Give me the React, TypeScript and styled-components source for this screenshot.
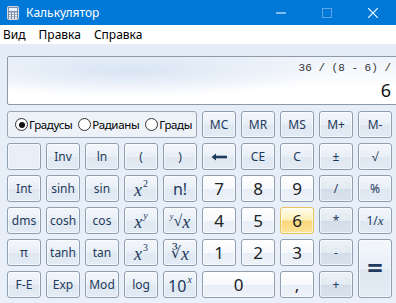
import styled, { createGlobalStyle, css } from "styled-components";

const GlobalStyle = createGlobalStyle`
  html, body {
    margin: 0;
    padding: 0;
    background: #e6eef8;
  }
  body {
    font-family: "Noto Sans", "Open Sans", sans-serif;
  }
`;

const uiFont = `"Noto Sans", "Open Sans", sans-serif`;
const mathFont = `"Liberation Serif", "DejaVu Serif", serif`;

const Window = styled.div`
  width: 396px;
  height: 303px;
  overflow: hidden;
  display: flex;
  flex-direction: column;
  background: linear-gradient(180deg, #e4ecf7 0%, #e9f0f9 100%);
`;

const TitleBar = styled.div`
  height: 25px;
  flex-shrink: 0;
  background: #0078d7;
  display: flex;
  align-items: center;
  padding-left: 7px;
  color: #ffffff;
  font-family: ${uiFont};
  font-size: 12px;
`;

const TitleText = styled.span`
  margin-left: 7px;
  flex: 1;
`;

const WinButton = styled.div`
  width: 46px;
  height: 25px;
  display: flex;
  align-items: center;
  justify-content: center;
`;

const MenuBar = styled.div`
  height: 19px;
  flex-shrink: 0;
  background: #ffffff;
  display: flex;
  align-items: center;
  padding-left: 3px;
  font-family: ${uiFont};
  font-size: 12px;
  color: #000;
`;

const MenuItem = styled.span`
  margin-right: 13px;
`;

const Body = styled.div`
  padding: 12px 4px 0 7px;
  display: flex;
  flex-direction: column;
  gap: 6px;
`;

const Display = styled.div`
  height: 47px;
  width: 383px;
  border: 1px solid #8e9aa8;
  border-radius: 2px;
  background:
    radial-gradient(ellipse 200px 26px at 120px 14px, rgba(214, 227, 243, 0.9), rgba(255, 255, 255, 0) 100%),
    linear-gradient(180deg, #eef3fa 0%, #ffffff 70%);
  display: flex;
  flex-direction: column;
  align-items: flex-end;
  padding-right: 6px;
`;

const Expr = styled.div`
  margin-top: 5px;
  font-family: "Liberation Mono", "DejaVu Sans Mono", monospace;
  font-size: 11px;
  color: #333;
  height: 13px;
  line-height: 13px;
`;

const Result = styled.div`
  margin-top: 4px;
  font-family: ${uiFont};
  font-size: 18px;
  line-height: 22px;
  color: #111;
`;

const Keypad = styled.div`
  display: grid;
  grid-template-columns: repeat(10, 34px);
  grid-auto-rows: 27px;
  gap: 5px;
`;

const RadioGroup = styled.div`
  grid-column: span 5;
  border: 1px solid #9aa7b7;
  border-radius: 3px;
  background: #edf2f9;
  display: flex;
  align-items: center;
  padding-left: 7px;
  gap: 6px;
  font-family: ${uiFont};
  font-size: 11.5px;
  letter-spacing: -0.35px;
  color: #000;
  white-space: nowrap;
`;

const RadioOption = styled.label`
  display: flex;
  align-items: center;
  gap: 1px;
`;

const RadioCircle = styled.span<{ checked?: boolean }>`
  width: 11px;
  height: 11px;
  flex-shrink: 0;
  border-radius: 50%;
  border: 1px solid #333;
  background: #fff;
  display: flex;
  align-items: center;
  justify-content: center;
  &::after {
    content: "";
    width: 6px;
    height: 6px;
    border-radius: 50%;
    background: ${({ checked }) => (checked ? "#111" : "transparent")};
  }
`;

type Kind = "fn" | "digit" | "op" | "hot" | "blank";

const kindStyles: Record<Kind, ReturnType<typeof css>> = {
  fn: css`
    background: linear-gradient(180deg, #f3f7fc 0%, #e9eff7 50%, #dfe7f1 52%, #e3ebf4 100%);
    color: #1e3a5c;
    font-size: 12px;
  `,
  digit: css`
    background: linear-gradient(180deg, #ffffff 0%, #f6f9fd 50%, #e8eef6 52%, #edf2f9 100%);
    color: #222;
    font-size: 17px;
  `,
  op: css`
    background: linear-gradient(180deg, #edf2f8 0%, #e3eaf3 50%, #d3deea 52%, #d9e3ee 100%);
    color: #1e3a5c;
    font-size: 12px;
  `,
  hot: css`
    background: linear-gradient(180deg, #fffcea 0%, #fdf0b8 48%, #fbd67a 52%, #fde49c 100%);
    border-color: #e7c45b;
    color: #222;
    font-size: 17px;
  `,
  blank: css`
    background: #e9eff8;
  `,
};

const Key = styled.div<{ kind?: Kind; wide?: boolean; tall?: boolean }>`
  box-sizing: border-box;
  border: 1px solid #8f9fb2;
  border-radius: 3px;
  display: flex;
  align-items: center;
  justify-content: center;
  font-family: ${uiFont};
  line-height: 1;
  box-shadow: inset 0 0 0 1px rgba(255, 255, 255, 0.6);
  ${({ kind = "fn" }) => kindStyles[kind]}
  ${({ wide }) => wide && "grid-column: span 2;"}
  ${({ tall }) => tall && "grid-row: span 2;"}
`;

const MathLabel = styled.span`
  display: flex;
  align-items: flex-start;
  color: #1e3a5c;
  margin-top: 2px;
`;

const Var = styled.i<{ small?: boolean }>`
  font-family: ${mathFont};
  font-size: ${({ small }) => (small ? "13px" : "18px")};
  line-height: 1;
`;

const Sup = styled.span<{ italic?: boolean }>`
  font-family: ${mathFont};
  font-size: 10px;
  font-style: ${({ italic }) => (italic ? "italic" : "normal")};
  line-height: 1;
  margin-top: -2px;
  margin-left: 1px;
`;

const RootIndex = styled.span`
  font-family: ${mathFont};
  font-style: italic;
  font-size: 8px;
  line-height: 1;
`;

const RootSign = styled.span`
  font-family: ${mathFont};
  font-size: 16px;
  line-height: 1;
`;

const Big = styled.span`
  font-size: 16px;
`;

const TenBase = styled.span`
  font-family: ${uiFont};
  font-size: 16px;
  line-height: 1;
  margin-top: 1px;
`;

const Equals = styled.span`
  font-size: 28px;
  font-weight: 600;
  color: #1e3a5c;
  margin-top: -4px;
`;

const CalcIcon = () => (
  <svg width="12" height="14" viewBox="0 0 12 14">
    <rect x="0.5" y="0.5" width="11" height="13" rx="1" fill="#7d8fa6" stroke="#cfd9e6" />
    <rect x="2" y="2" width="8" height="3" fill="#e8f1fb" />
    {[0, 1, 2].map((r) =>
      [0, 1, 2].map((c) => (
        <rect key={`${r}-${c}`} x={2 + c * 3} y={6.5 + r * 2.3} width="2" height="1.6" fill="#f3f6fa" />
      ))
    )}
  </svg>
);

const BackArrow = () => (
  <svg width="16" height="8" viewBox="0 0 16 8">
    <path d="M5 0.5 L0.5 4 L5 7.5 Z" fill="#1e3a5c" />
    <rect x="4" y="2.7" width="12" height="2.6" fill="#1e3a5c" />
  </svg>
);

const radios = [
  { label: "Градусы", checked: true },
  { label: "Радианы", checked: false },
  { label: "Грады", checked: false },
];

export default function App() {
  return (
    <Window>
      <GlobalStyle />
      <TitleBar>
        <CalcIcon />
        <TitleText>Калькулятор</TitleText>
        <WinButton>
          <svg width="10" height="10" viewBox="0 0 10 10">
            <rect x="0" y="4.5" width="10" height="1" fill="#fff" />
          </svg>
        </WinButton>
        <WinButton>
          <svg width="10" height="10" viewBox="0 0 10 10">
            <rect x="0.5" y="0.5" width="9" height="9" fill="none" stroke="#5aa6e8" />
          </svg>
        </WinButton>
        <WinButton>
          <svg width="10" height="10" viewBox="0 0 10 10">
            <path d="M0 0 L10 10 M10 0 L0 10" stroke="#fff" strokeWidth="1.1" />
          </svg>
        </WinButton>
      </TitleBar>
      <MenuBar>
        <MenuItem>Вид</MenuItem>
        <MenuItem>Правка</MenuItem>
        <MenuItem>Справка</MenuItem>
      </MenuBar>
      <Body>
        <Display>
          <Expr>36 / (8 - 6) /</Expr>
          <Result>6</Result>
        </Display>
        <Keypad>
          <RadioGroup>
            {radios.map((r) => (
              <RadioOption key={r.label}>
                <RadioCircle checked={r.checked} />
                {r.label}
              </RadioOption>
            ))}
          </RadioGroup>
          <Key>MC</Key>
          <Key>MR</Key>
          <Key>MS</Key>
          <Key>M+</Key>
          <Key>M-</Key>

          <Key kind="blank" />
          <Key>Inv</Key>
          <Key>ln</Key>
          <Key>(</Key>
          <Key>)</Key>
          <Key>
            <BackArrow />
          </Key>
          <Key>CE</Key>
          <Key>C</Key>
          <Key>±</Key>
          <Key>√</Key>

          <Key>Int</Key>
          <Key>sinh</Key>
          <Key>sin</Key>
          <Key>
            <MathLabel>
              <Var>x</Var>
              <Sup>2</Sup>
            </MathLabel>
          </Key>
          <Key>
            <Big>n!</Big>
          </Key>
          <Key kind="digit">7</Key>
          <Key kind="digit">8</Key>
          <Key kind="digit">9</Key>
          <Key kind="op">/</Key>
          <Key>%</Key>

          <Key>dms</Key>
          <Key>cosh</Key>
          <Key>cos</Key>
          <Key>
            <MathLabel>
              <Var>x</Var>
              <Sup italic>y</Sup>
            </MathLabel>
          </Key>
          <Key>
            <MathLabel>
              <RootIndex>y</RootIndex>
              <RootSign>√</RootSign>
              <Var>x</Var>
            </MathLabel>
          </Key>
          <Key kind="digit">4</Key>
          <Key kind="digit">5</Key>
          <Key kind="hot">6</Key>
          <Key kind="op">*</Key>
          <Key>
            1/<Var small>x</Var>
          </Key>

          <Key>π</Key>
          <Key>tanh</Key>
          <Key>tan</Key>
          <Key>
            <MathLabel>
              <Var>x</Var>
              <Sup>3</Sup>
            </MathLabel>
          </Key>
          <Key>
            <MathLabel>
              <RootSign>∛</RootSign>
              <Var>x</Var>
            </MathLabel>
          </Key>
          <Key kind="digit">1</Key>
          <Key kind="digit">2</Key>
          <Key kind="digit">3</Key>
          <Key kind="op">-</Key>
          <Key tall>
            <Equals>=</Equals>
          </Key>

          <Key>F-E</Key>
          <Key>Exp</Key>
          <Key>Mod</Key>
          <Key>log</Key>
          <Key>
            <MathLabel>
              <TenBase>10</TenBase>
              <Sup italic>x</Sup>
            </MathLabel>
          </Key>
          <Key kind="digit" wide>
            0
          </Key>
          <Key kind="digit">,</Key>
          <Key kind="op">+</Key>
        </Keypad>
      </Body>
    </Window>
  );
}
